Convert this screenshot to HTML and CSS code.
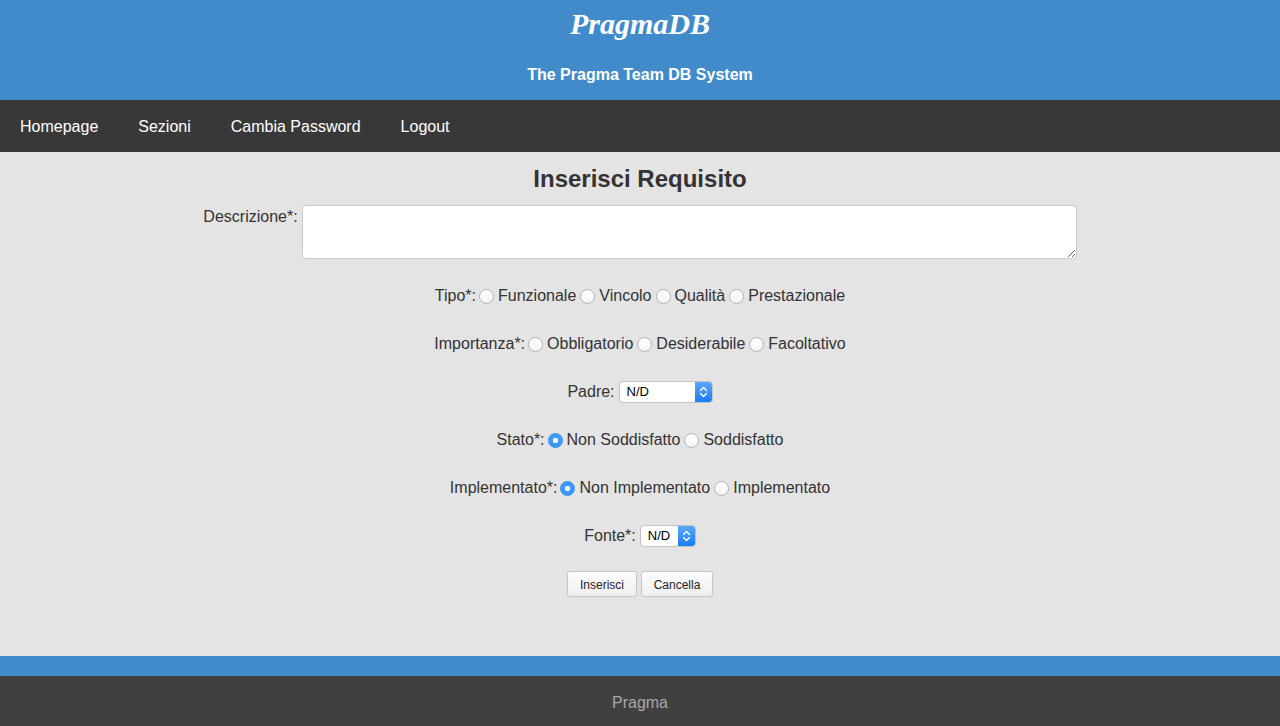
FILE: index.html
```html
<!DOCTYPE html>
<html lang="it">
<head>
<meta charset="utf-8">
<title>PragmaDB - Inserisci Requisito</title>
<link rel="stylesheet" href="styles.css">
</head>
<body>
<header class="masthead">
  <h1 class="brand">PragmaDB</h1>
  <p class="tagline">The Pragma Team DB System</p>
</header>
<nav class="menu">
  <a href="#" class="menu-item">Homepage</a>
  <a href="#" class="menu-item">Sezioni</a>
  <a href="#" class="menu-item">Cambia Password</a>
  <a href="#" class="menu-item">Logout</a>
</nav>
<main class="content">
  <h2 class="page-title">Inserisci Requisito</h2>
  <form class="form">
    <div class="row row-desc">
      <label class="desc-label" for="desc">Descrizione*:</label>
      <textarea id="desc" class="desc-input"></textarea>
    </div>
    <div class="row">
      <span class="lbl">Tipo*:</span><input type="radio" name="tipo" class="radio"><span>Funzionale</span><input type="radio" name="tipo" class="radio"><span>Vincolo</span><input type="radio" name="tipo" class="radio"><span>Qualità</span><input type="radio" name="tipo" class="radio"><span>Prestazionale</span>
    </div>
    <div class="row">
      <span class="lbl">Importanza*:</span><input type="radio" name="imp" class="radio"><span>Obbligatorio</span><input type="radio" name="imp" class="radio"><span>Desiderabile</span><input type="radio" name="imp" class="radio"><span>Facoltativo</span>
    </div>
    <div class="row">
      <span class="lbl lbl-sel">Padre:</span>
      <span class="select select-wide"><select class="select-native"><option>N/D</option></select><span class="select-arrows"><svg width="9" height="12" viewBox="0 0 9 12"><path d="M1.5 4.5 L4.5 1.5 L7.5 4.5 M1.5 7.5 L4.5 10.5 L7.5 7.5" fill="none" stroke="#fff" stroke-width="1.4" stroke-linecap="round" stroke-linejoin="round"/></svg></span></span>
    </div>
    <div class="row">
      <span class="lbl">Stato*:</span><input type="radio" name="stato" class="radio" checked><span>Non Soddisfatto</span><input type="radio" name="stato" class="radio"><span>Soddisfatto</span>
    </div>
    <div class="row">
      <span class="lbl">Implementato*:</span><input type="radio" name="impl" class="radio" checked><span>Non Implementato</span><input type="radio" name="impl" class="radio"><span>Implementato</span>
    </div>
    <div class="row">
      <span class="lbl lbl-sel">Fonte*:</span>
      <span class="select select-narrow"><select class="select-native"><option>N/D</option></select><span class="select-arrows"><svg width="9" height="12" viewBox="0 0 9 12"><path d="M1.5 4.5 L4.5 1.5 L7.5 4.5 M1.5 7.5 L4.5 10.5 L7.5 7.5" fill="none" stroke="#fff" stroke-width="1.4" stroke-linecap="round" stroke-linejoin="round"/></svg></span></span>
    </div>
    <div class="row row-buttons">
      <button type="submit" class="btn btn-ins">Inserisci</button>
      <button type="reset" class="btn btn-can">Cancella</button>
    </div>
  </form>
</main>
<div class="footer-bar"></div>
<footer class="footer">Pragma</footer>
</body>
</html>
```

FILE: styles.css
```css
* { box-sizing: border-box; }
html, body { margin: 0; padding: 0; }
body {
  font-family: "Liberation Sans", Arial, Helvetica, sans-serif;
  font-size: 16px;
  color: #333;
  background: #e4e4e4;
  height: 726px;
  display: flex;
  flex-direction: column;
}
.masthead {
  background: #428bca;
  height: 100px;
  flex: none;
  text-align: center;
  color: #fff;
  padding-top: 4px;
}
.brand {
  margin: 0;
  font-family: "Liberation Serif", "Times New Roman", serif;
  font-style: italic;
  font-weight: bold;
  font-size: 30px;
  line-height: 40px;
}
.tagline {
  margin: 21px 0 0;
  font-weight: bold;
  font-size: 16px;
  line-height: 20px;
}
.menu {
  background: #383838;
  height: 52px;
  flex: none;
  display: flex;
  padding-top: 1px;
}
.menu-item {
  color: #fff;
  text-decoration: none;
  line-height: 51px;
  padding: 0 20px;
  font-size: 16px;
}
.content {
  flex: 1;
  padding-top: 13px;
  text-align: center;
}
.page-title {
  margin: 0;
  font-size: 24px;
  line-height: 28px;
  font-weight: bold;
  color: #333;
}
.form {
  margin-top: 12px;
  display: flex;
  flex-direction: column;
  gap: 24px;
}
.row {
  display: flex;
  justify-content: center;
  align-items: center;
  height: 24px;
  line-height: 22px;
  padding-top: 2px;
}
.row-desc {
  height: 54px;
  align-items: flex-start;
  gap: 4px;
  padding-top: 0;
}
.desc-label {
  line-height: 20px;
  padding-top: 2px;
}
.desc-input {
  width: 775px;
  height: 54px;
  border: 1px solid #c8c8c8;
  border-radius: 4px;
  background: #fff;
  margin: 0;
  resize: both;
  font-family: "Liberation Mono", monospace;
}
.radio {
  appearance: none;
  -webkit-appearance: none;
  width: 15px;
  height: 15px;
  margin: 0 4px 0 4px;
  border-radius: 50%;
  border: 1px solid #b2b2b2;
  background: linear-gradient(#ffffff, #f4f4f4);
  flex: none;
}
.lbl + .radio { margin-left: 3px; }
.radio:checked {
  background: radial-gradient(circle, #fff 0 2.5px, #3b99fc 3px);
  border-color: #3a8ee6;
}
.lbl-sel { margin-right: 4px; }
.select {
  display: inline-flex;
  height: 22px;
  border: 1px solid #c3c3c3;
  border-radius: 4px;
  background: #fff;
  overflow: hidden;
}
.select-wide { width: 94px; }
.select-narrow { width: 56px; }
.select-native {
  appearance: none;
  -webkit-appearance: none;
  border: 0;
  background: transparent;
  flex: 1;
  min-width: 0;
  font-family: "Liberation Sans", Arial, sans-serif;
  font-size: 13px;
  color: #000;
  padding: 0 0 0 7px;
  margin: 0;
  height: 20px;
  line-height: 20px;
}
.select-arrows {
  width: 17px;
  flex: none;
  background: linear-gradient(#5aa8fb, #1a7cf4);
  display: flex;
  align-items: center;
  justify-content: center;
}
.row-buttons {
  height: 26px;
  gap: 4px;
  padding-top: 0;
}
.btn {
  height: 26px;
  border: 1px solid #c6c6c6;
  border-radius: 3px;
  background: linear-gradient(#fdfdfd, #efefef);
  font-family: "Liberation Sans", Arial, sans-serif;
  font-size: 12px;
  color: #222;
  padding: 1px 0 0;
  margin: 0;
}
.btn-ins { width: 70px; }
.btn-can { width: 72px; }
.footer-bar {
  height: 20px;
  background: #428bca;
  flex: none;
}
.footer {
  height: 50px;
  background: #404040;
  color: #a8a8a8;
  text-align: center;
  line-height: 54px;
  font-size: 16px;
  flex: none;
}
```
